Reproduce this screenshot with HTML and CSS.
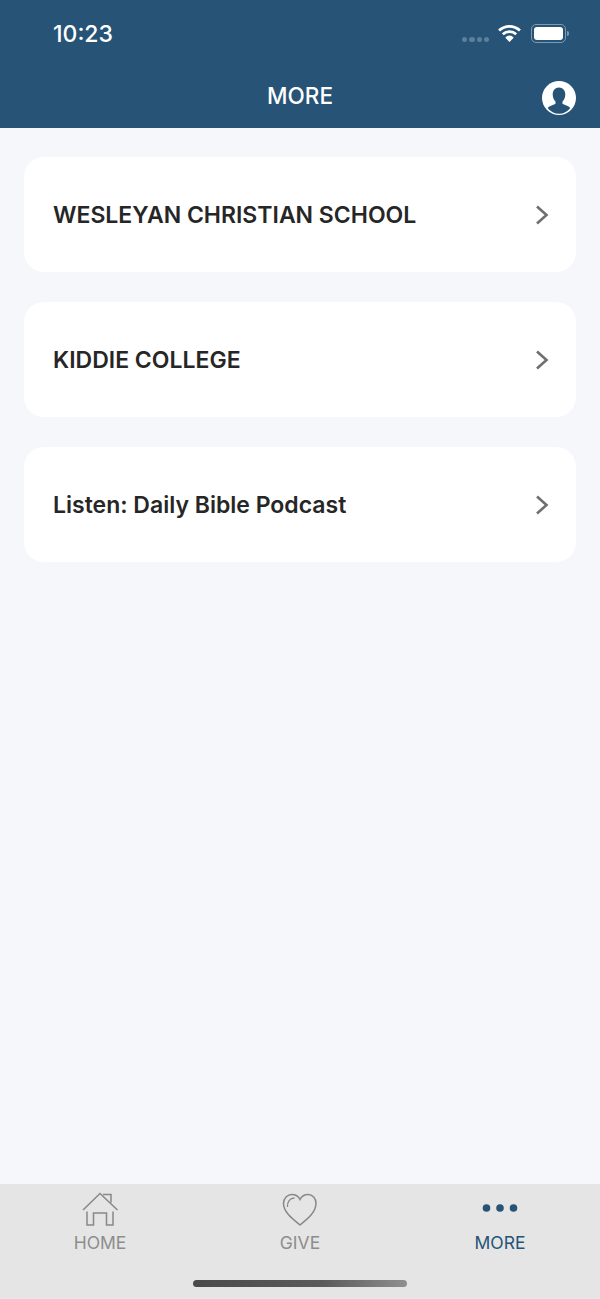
FILE: index.html
```html
<!DOCTYPE html>
<html>
<head>
    <meta charset="utf-8">
    <title>More</title>
    <link rel="stylesheet" href="styles.css">
</head>
<body>
<div class="app">
    <header class="top">
        <div class="status-bar">
            <div class="time">10:23</div>
            <div class="status-icons">
                <div class="signal"><span></span><span></span><span></span><span></span></div>
                <svg class="wifi" width="23" height="18" viewBox="0 0 22 17">
                    <path d="M1 6.200a14.400 14.400 0 0 1 20 0" fill="none" stroke="#fff" stroke-width="2.600"/>
                    <path d="M4.600 9.800a9.300 9.300 0 0 1 12.800 0" fill="none" stroke="#fff" stroke-width="2.600"/>
                    <path d="M7 13a5 5 0 0 1 8 0l-4 4z" fill="#fff"/>
                </svg>
                <div class="battery"><div class="battery-level"></div></div>
                <div class="battery-tip"></div>
            </div>
        </div>
        <div class="nav-bar">
            <div class="nav-side"></div>
            <div class="nav-title">MORE</div>
            <div class="nav-side nav-side-right">
                <svg class="profile" width="34" height="34" viewBox="0 0 34 34">
                    <circle cx="17" cy="17" r="17" fill="#fff"/>
                    <path d="M17 6.500c-3.900 0-6.300 2.900-6.300 6.900 0 2.900 1.200 5.500 2.800 7v2.300c-1.500 1.100-6.200 2-7.800 4.200a13.800 13.800 0 0 0 22.600 0c-1.600-2.200-6.300-3.100-7.800-4.200v-2.300c1.600-1.500 2.800-4.100 2.800-7 0-4-2.400-6.900-6.300-6.900z" fill="#265376"/>
                </svg>
            </div>
        </div>
    </header>

    <main class="list">
        <div class="list-item">
            <div class="list-label">WESLEYAN CHRISTIAN SCHOOL</div>
            <svg class="chevron" width="14" height="20" viewBox="0 0 14 20"><path d="M2 1.500l9.500 8.500-9.500 8.500" fill="none" stroke="#6f6f6f" stroke-width="2.600"/></svg>
        </div>
        <div class="list-item">
            <div class="list-label">KIDDIE COLLEGE</div>
            <svg class="chevron" width="14" height="20" viewBox="0 0 14 20"><path d="M2 1.500l9.500 8.500-9.500 8.500" fill="none" stroke="#6f6f6f" stroke-width="2.600"/></svg>
        </div>
        <div class="list-item">
            <div class="list-label">Listen: Daily Bible Podcast</div>
            <svg class="chevron" width="14" height="20" viewBox="0 0 14 20"><path d="M2 1.500l9.500 8.500-9.500 8.500" fill="none" stroke="#6f6f6f" stroke-width="2.600"/></svg>
        </div>
    </main>

    <footer class="tab-bar">
        <div class="tab">
            <svg class="tab-icon" width="38" height="36" viewBox="0 0 38 36">
                <path d="M2 18L19 1.500 36.500 18M22 2.500h8v8M6 19.500V33h6.500V21h13v12H32V19.500" fill="none" stroke="#888" stroke-width="1.500"/>
            </svg>
            <div class="tab-label">HOME</div>
        </div>
        <div class="tab">
            <svg class="tab-icon" width="38" height="36" viewBox="0 0 38 36">
                <path d="M19 33C11 26.500 2.500 20 2.500 11.500 2.500 6 6.500 2.500 11 2.500c3.500 0 6.500 2 8 5 1.500-3 4.500-5 8-5 4.500 0 8 3.500 8 9 0 8.500-8 15-16 21.500z" fill="none" stroke="#888" stroke-width="1.500"/>
                <path d="M6.500 15c-.5-5 2.500-9 7-9" fill="none" stroke="#888" stroke-width="1.300"/>
            </svg>
            <div class="tab-label">GIVE</div>
        </div>
        <div class="tab tab-active">
            <svg class="tab-icon" width="38" height="36" viewBox="0 0 38 36">
                <circle cx="5.500" cy="16" r="3.800" fill="#265376"/>
                <circle cx="19" cy="16" r="3.800" fill="#265376"/>
                <circle cx="32.500" cy="16" r="3.800" fill="#265376"/>
            </svg>
            <div class="tab-label">MORE</div>
        </div>
        <div class="home-indicator"></div>
    </footer>
</div>
</body>
</html>
```

FILE: styles.css
```css
body {
    margin: 0;
    font-family: "Inter", "Liberation Sans", sans-serif;
    background: #f5f7fb;
}

.app {
    width: 600px;
    height: 1299px;
    display: flex;
    flex-direction: column;
    overflow: hidden;
}

.top {
    height: 128px;
    background: #265376;
    color: #fff;
}

.status-bar {
    height: 66px;
    display: flex;
    justify-content: space-between;
    align-items: center;
    padding: 0 31px 0 53px;
}

.time {
    font-size: 23px;
    font-weight: 500;
    margin-top: 1px;
}

.status-icons {
    display: flex;
    align-items: center;
}

.signal {
    display: flex;
    gap: 2px;
    margin: 13px 9px 0 0;
}

.signal span {
    width: 5.250px;
    height: 5.250px;
    border-radius: 50%;
    background: #5c7f9b;
}

.wifi {
    margin-right: 10px;
}

.battery {
    width: 29px;
    height: 13px;
    padding: 2px;
    border: 1px solid #7d9ab1;
    border-radius: 5px;
}

.battery-level {
    height: 100%;
    background: #fff;
    border-radius: 3px;
}

.battery-tip {
    width: 2px;
    height: 5px;
    margin-left: 1px;
    background: #7d9ab1;
    border-radius: 0 2px 2px 0;
}

.nav-bar {
    height: 62px;
    display: flex;
    align-items: center;
    padding: 0 24px;
}

.nav-side {
    flex: 1;
    display: flex;
}

.nav-side-right {
    justify-content: flex-end;
    padding-top: 2px;
}

.nav-title {
    font-size: 22.500px;
    font-weight: 500;
    margin-top: -4px;
}

.list {
    flex: 1;
    display: flex;
    flex-direction: column;
    gap: 30px;
    padding: 29px 24px 0;
}

.list-item {
    height: 115px;
    display: flex;
    align-items: center;
    justify-content: space-between;
    padding: 0 27px 0 29px;
    background: #fff;
    border-radius: 20px;
}

.list-label {
    font-size: 23px;
    font-weight: 600;
    color: #262626;
}

.tab-bar {
    position: relative;
    height: 115px;
    display: flex;
    background: #e5e5e5;
}

.tab {
    flex: 1;
    display: flex;
    flex-direction: column;
    align-items: center;
    padding-top: 8px;
    color: #8d8d8d;
}

.tab-active {
    color: #265376;
}

.tab-label {
    font-size: 17.500px;
    margin-top: 4px;
}

.home-indicator {
    position: absolute;
    left: 193px;
    top: 96px;
    width: 214px;
    height: 7px;
    border-radius: 4px;
    background: linear-gradient(to right, #4a4a4a, #5a5a5a 60%, #8f8f8f);
}
```
